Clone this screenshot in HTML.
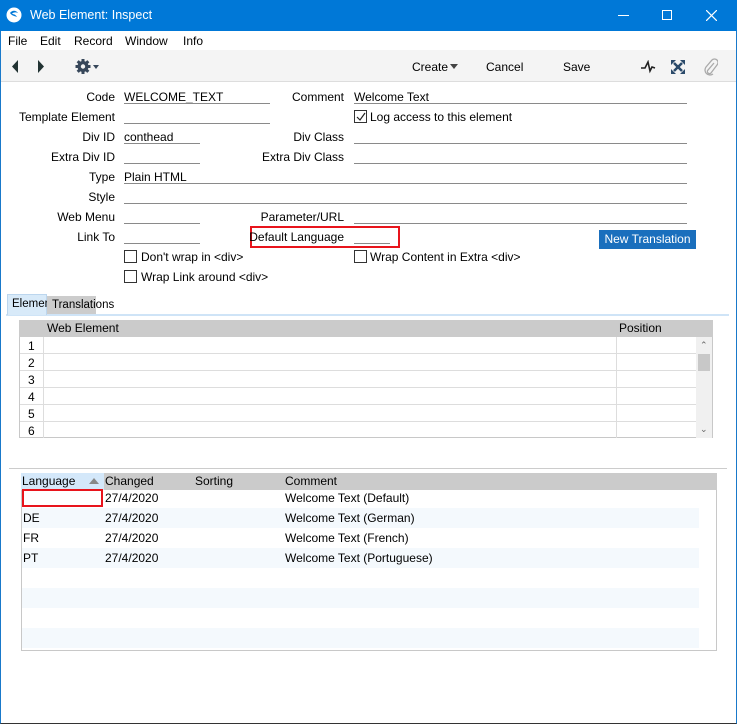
<!DOCTYPE html>
<html><head><meta charset="utf-8"><style>
*{margin:0;padding:0;box-sizing:border-box}
body{width:737px;height:724px;overflow:hidden;background:#fff;font-family:"Liberation Sans",sans-serif;font-size:12px;color:#000;position:relative}
.a{position:absolute;white-space:nowrap}
.l{position:absolute;text-align:right;line-height:14px}
.t{position:absolute;line-height:14px}
.u{position:absolute;height:1px;background:#8a8a8a}
.cb{position:absolute;width:13px;height:13px;border:1px solid #333;background:#fff}
</style></head><body>
<!-- window border -->
<div class="a" style="left:0;top:0;width:737px;height:724px;border:1px solid #1979ca;border-bottom:1px solid #333"></div>
<!-- title bar -->
<div class="a" style="left:0;top:0;width:737px;height:31px;background:#0078d7"></div>
<svg class="a" style="left:6px;top:7px" width="16" height="16" viewBox="0 0 16 16"><circle cx="8" cy="8" r="7.5" fill="#fff"/><path d="M4 6c2-3 6-3 8 0c-2-1-5-1-6 1c2 0 4 1 5 3c-2-1-5-1-7-4z" fill="#0078d7"/></svg>
<div class="a" style="left:30px;top:8px;color:#fff;font-size:12.5px">Web Element: Inspect</div>
<div class="a" style="left:618px;top:15px;width:11px;height:1px;background:#fff"></div>
<div class="a" style="left:662px;top:10px;width:10px;height:10px;border:1px solid #fff"></div>
<svg class="a" style="left:706px;top:10px" width="11" height="11"><path d="M0 0L11 11M11 0L0 11" stroke="#fff" stroke-width="1.2"/></svg>
<!-- menu -->
<div class="a" style="left:8px;top:34px">File</div>
<div class="a" style="left:40px;top:34px">Edit</div>
<div class="a" style="left:74px;top:34px">Record</div>
<div class="a" style="left:125px;top:34px">Window</div>
<div class="a" style="left:183px;top:34px">Info</div>
<!-- toolbar -->
<div class="a" style="left:1px;top:50px;width:735px;height:32px;background:#f4f4f4;border-bottom:1px solid #ddd"></div>
<svg class="a" style="left:10px;top:59px" width="40" height="16"><path d="M8 1L2 7.5L8 14z" fill="#233"/><path d="M28 1L34 7.5L28 14z" fill="#233"/></svg>
<svg class="a" style="left:75px;top:58px" width="30" height="17" viewBox="0 0 30 17"><g fill="#37475a"><circle cx="8" cy="8.5" r="5.5"/><rect x="6.5" y="1" width="3" height="15"/><rect x="0.5" y="7" width="15" height="3"/><rect x="6.5" y="1" width="3" height="15" transform="rotate(45 8 8.5)"/><rect x="6.5" y="1" width="3" height="15" transform="rotate(-45 8 8.5)"/></g><circle cx="8" cy="8.5" r="2.2" fill="#f4f4f4"/><path d="M18 7h6l-3 4z" fill="#37475a"/></svg>
<div class="a" style="left:412px;top:60px">Create</div>
<svg class="a" style="left:450px;top:64px" width="9" height="6"><path d="M0 0h8l-4 5z" fill="#444"/></svg>
<div class="a" style="left:486px;top:60px">Cancel</div>
<div class="a" style="left:563px;top:60px">Save</div>
<svg class="a" style="left:640px;top:60px" width="16" height="14"><path d="M1 8L5 8L8 2L10 11L12 7L15 8" stroke="#222" stroke-width="1.6" fill="none"/></svg>
<svg class="a" style="left:671px;top:60px" width="14" height="14"><g fill="#2b4a6a"><path d="M0 0h5L0 5z M14 0v5L9 0z M0 14v-5l5 5z M14 14h-5l5-5z"/><path d="M3 3l8 8M11 3l-8 8" stroke="#2b4a6a" stroke-width="2.5"/><rect x="5" y="5" width="4" height="4"/></g></svg>
<svg class="a" style="left:704px;top:58px" width="14" height="18"><path d="M10 5L4 12a2 2 0 0 0 3 3L13 7a3.5 3.5 0 0 0-5-5L2 9a5 5 0 0 0 7 7" stroke="#aaa" stroke-width="1.3" fill="none"/></svg>
<!-- form -->
<div class="l" style="left:0;width:115px;top:90px">Code</div>
<div class="t" style="left:124px;top:90px">WELCOME_TEXT</div><div class="u" style="left:124px;top:103px;width:146px"></div>
<div class="l" style="left:200px;width:144px;top:90px">Comment</div>
<div class="t" style="left:354px;top:90px">Welcome Text</div><div class="u" style="left:354px;top:103px;width:333px"></div>

<div class="l" style="left:0;width:115px;top:110px">Template Element</div>
<div class="u" style="left:124px;top:123px;width:146px"></div>
<div class="cb" style="left:354px;top:110px"></div>
<svg class="a" style="left:356px;top:112px" width="10" height="10"><path d="M1 5l3 3l5-7" stroke="#222" stroke-width="1.2" fill="none"/></svg>
<div class="t" style="left:370px;top:110px">Log access to this element</div>

<div class="l" style="left:0;width:115px;top:130px">Div ID</div>
<div class="t" style="left:124px;top:130px">conthead</div><div class="u" style="left:124px;top:143px;width:76px"></div>
<div class="l" style="left:200px;width:144px;top:130px">Div Class</div>
<div class="u" style="left:354px;top:143px;width:333px"></div>

<div class="l" style="left:0;width:115px;top:150px">Extra Div ID</div>
<div class="u" style="left:124px;top:163px;width:76px"></div>
<div class="l" style="left:200px;width:144px;top:150px">Extra Div Class</div>
<div class="u" style="left:354px;top:163px;width:333px"></div>

<div class="l" style="left:0;width:115px;top:170px">Type</div>
<div class="t" style="left:124px;top:170px">Plain HTML</div><div class="u" style="left:124px;top:183px;width:563px"></div>

<div class="l" style="left:0;width:115px;top:190px">Style</div>
<div class="u" style="left:124px;top:203px;width:563px"></div>

<div class="l" style="left:0;width:115px;top:210px">Web Menu</div>
<div class="u" style="left:124px;top:223px;width:76px"></div>
<div class="l" style="left:200px;width:144px;top:210px">Parameter/URL</div>
<div class="u" style="left:354px;top:223px;width:333px"></div>

<div class="l" style="left:0;width:115px;top:230px">Link To</div>
<div class="u" style="left:124px;top:243px;width:76px"></div>
<div class="a" style="left:250px;top:226px;width:150px;height:22px;border:2px solid #e8141c"></div>
<div class="l" style="left:200px;width:144px;top:230px">Default Language</div>
<div class="u" style="left:354px;top:243px;width:36px"></div>
<div class="a" style="left:599px;top:230px;width:97px;height:19px;background:#1a6fbd;color:#fff;text-align:center;line-height:19px">New Translation</div>

<div class="cb" style="left:124px;top:250px"></div><div class="t" style="left:141px;top:250px">Don't wrap in &lt;div&gt;</div>
<div class="cb" style="left:354px;top:250px"></div><div class="t" style="left:370px;top:250px">Wrap Content in Extra &lt;div&gt;</div>
<div class="cb" style="left:124px;top:270px"></div><div class="t" style="left:141px;top:270px">Wrap Link around &lt;div&gt;</div>

<!-- tabs -->
<div class="a" style="left:6px;top:314px;width:723px;height:2px;background:#cfe4f7"></div>
<div class="a" style="left:7px;top:294px;width:40px;height:21px;background:#d8eaf9;border:1px solid #bcd6ee;border-bottom:none;line-height:19px;padding-left:4px;font-size:11.5px">Elements</div>
<div class="a" style="left:47px;top:296px;width:49px;height:18px;background:#ccc;line-height:18px;padding-left:5px;font-size:11.5px;width:49px">Translations</div>
<div class="a" style="left:47px;top:296px;width:49px;height:18px;background:#ccc;line-height:18px;padding-left:5px;font-size:11.5px;width:49px;visibility:hidden"></div>
<!-- elements grid -->
<div class="a" style="left:19px;top:320px;width:694px;height:118px;border:1px solid #c8c8c8;background:#fff"></div>
<div class="a" style="left:19px;top:320px;width:694px;height:17px;background:#cbcbcb"></div>
<div class="a" style="left:47px;top:321px">Web Element</div>
<div class="a" style="left:619px;top:321px">Position</div>
<div class="a" style="left:43px;top:337px;width:1px;height:101px;background:#ddd"></div>
<div class="a" style="left:616px;top:337px;width:1px;height:101px;background:#ddd"></div>
<div class="a" style="left:696px;top:337px;width:16px;height:101px;background:#f0f0f0"></div>
<div class="a" style="left:698px;top:354px;width:12px;height:17px;background:#c8c8c8"></div>
<div class="a" style="left:700px;top:340px;font-size:9px;color:#666">&#8963;</div>
<div class="a" style="left:700px;top:424px;font-size:9px;color:#666">&#8964;</div>
<div class="a" style="left:20px;top:353px;width:676px;height:1px;background:#ddd"></div>
<div class="a" style="left:20px;top:370px;width:676px;height:1px;background:#ddd"></div>
<div class="a" style="left:20px;top:387px;width:676px;height:1px;background:#ddd"></div>
<div class="a" style="left:20px;top:404px;width:676px;height:1px;background:#ddd"></div>
<div class="a" style="left:20px;top:421px;width:676px;height:1px;background:#ddd"></div>
<div class="a" style="left:28px;top:339px">1</div>
<div class="a" style="left:28px;top:356px">2</div>
<div class="a" style="left:28px;top:373px">3</div>
<div class="a" style="left:28px;top:390px">4</div>
<div class="a" style="left:28px;top:407px">5</div>
<div class="a" style="left:28px;top:424px">6</div>
<!-- separator -->
<div class="a" style="left:9px;top:468px;width:718px;height:1px;background:#ccc"></div>
<!-- translations list -->
<div class="a" style="left:21px;top:473px;width:696px;height:178px;border:1px solid #c8c8c8;background:#fff"></div>
<div class="a" style="left:21px;top:473px;width:696px;height:17px;background:#cbcbcb"></div>
<div class="a" style="left:21px;top:473px;width:83px;height:17px;background:#d4e8fa"></div>
<div class="a" style="left:22px;top:474px">Language</div>
<svg class="a" style="left:89px;top:478px" width="10" height="6"><path d="M0 6L5 0L10 6z" fill="#888"/></svg>
<div class="a" style="left:105px;top:474px">Changed</div>
<div class="a" style="left:195px;top:474px">Sorting</div>
<div class="a" style="left:285px;top:474px">Comment</div>
<div class="a" style="left:22px;top:508px;width:677px;height:20px;background:#f4f9fd"></div>
<div class="a" style="left:22px;top:548px;width:677px;height:20px;background:#f4f9fd"></div>
<div class="a" style="left:22px;top:588px;width:677px;height:20px;background:#f4f9fd"></div>
<div class="a" style="left:22px;top:628px;width:677px;height:20px;background:#f4f9fd"></div>
<div class="a" style="left:22px;top:489px;width:81px;height:18px;border:2px solid #e8141c"></div>
<div class="a" style="left:105px;top:491px">27/4/2020</div><div class="a" style="left:285px;top:491px">Welcome Text (Default)</div>
<div class="a" style="left:23px;top:511px">DE</div><div class="a" style="left:105px;top:511px">27/4/2020</div><div class="a" style="left:285px;top:511px">Welcome Text (German)</div>
<div class="a" style="left:23px;top:531px">FR</div><div class="a" style="left:105px;top:531px">27/4/2020</div><div class="a" style="left:285px;top:531px">Welcome Text (French)</div>
<div class="a" style="left:23px;top:551px">PT</div><div class="a" style="left:105px;top:551px">27/4/2020</div><div class="a" style="left:285px;top:551px">Welcome Text (Portuguese)</div>
</body></html>
